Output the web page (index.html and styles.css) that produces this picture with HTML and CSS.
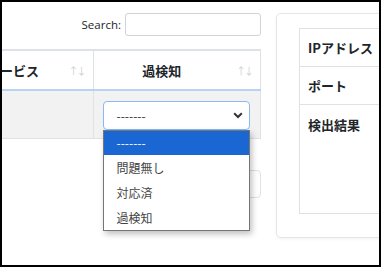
FILE: index.html
```html
<!DOCTYPE html>
<html lang="ja">

<head>
    <meta charset="UTF-8">
    <meta name="viewport" content="width=device-width, initial-scale=1.0">
    <title>検出一覧</title>
    <link rel="stylesheet" href="styles.css">
</head>

<body>

    <div class="frame">
        <div class="page">
            <div class="list-col">
                <div class="search-row">
                    <label for="search">Search:</label>
                    <input type="search" id="search">
                </div>

                <div class="table-wrap">
                    <table class="result-table">
                        <thead>
                            <tr>
                                <th class="col-service">サービス<span class="sort">&#8593;&#8595;</span></th>
                                <th class="col-false">過検知<span class="sort">&#8593;&#8595;</span></th>
                            </tr>
                        </thead>
                        <tbody>
                            <tr>
                                <td></td>
                                <td>
                                    <div class="select-box">
                                        <div class="select">
                                            <span>-------</span>
                                            <svg width="10" height="7" viewBox="0 0 10 7"><path d="M1.2 1.3 L5 5 L8.8 1.3" fill="none" stroke="#333" stroke-width="2"/></svg>
                                        </div>
                                        <ul class="options">
                                            <li class="active">-------</li>
                                            <li>問題無し</li>
                                            <li>対応済</li>
                                            <li>過検知</li>
                                        </ul>
                                    </div>
                                </td>
                            </tr>
                        </tbody>
                    </table>
                </div>

                <div class="pager">
                    <button>Next</button>
                </div>
            </div>

            <div class="card">
                <table class="detail-table">
                    <tr><th>IPアドレス</th></tr>
                    <tr><th>ポート</th></tr>
                    <tr class="tall"><th>検出結果</th></tr>
                </table>
            </div>
        </div>
    </div>

</body>

</html>
```

FILE: styles.css
```css
body {
    margin: 0;
    font-family: 'Open Sans', 'Noto Sans CJK JP', sans-serif;
    color: #212529;
    background-color: #fff;
}

.frame {
    width: 381px;
    height: 267px;
    box-sizing: border-box;
    border: 2px solid #000;
    overflow: hidden;
}

.page {
    display: flex;
    padding-top: 11px;
}

.list-col {
    width: 259px;
    flex: none;
}

.search-row {
    display: flex;
    justify-content: flex-end;
    align-items: center;
    gap: 4px;
    font-size: 11.5px;
}

.search-row input {
    width: 136px;
    height: 23px;
    box-sizing: border-box;
    border: 1px solid #ced4da;
    border-radius: 3px;
    margin: 0;
}

.table-wrap {
    margin-top: 13px;
    position: relative;
    z-index: 2;
}

.result-table {
    margin-left: -25px;
    width: 284px;
    border-collapse: collapse;
    table-layout: fixed;
    font-family: 'Noto Sans CJK JP', sans-serif;
}

.result-table th {
    position: relative;
    height: 38px;
    padding: 0 40px 0 10px;
    font-size: 13px;
    font-weight: bold;
    text-align: center;
    border-top: 2px solid #dee2e6;
    border-bottom: 2px solid #b6d3f6;
    border-right: 1px solid #dee2e6;
}

.result-table th.col-service {
    width: 116px;
    box-sizing: border-box;
    text-align: left;
    padding-left: 10px;
}

.sort {
    position: absolute;
    right: 8px;
    top: 12px;
    font-size: 10px;
    font-weight: normal;
    letter-spacing: -2px;
    color: #cdd1d5;
}

.result-table td {
    height: 48px;
    padding: 0 10px 0 9px;
    background-color: #f2f2f2;
    border-right: 1px solid #dee2e6;
    border-bottom: 1px solid #dee2e6;
    vertical-align: top;
    box-sizing: border-box;
}

.select-box {
    position: relative;
    margin-top: 10px;
}

.select {
    display: flex;
    align-items: center;
    justify-content: space-between;
    height: 29px;
    box-sizing: border-box;
    padding: 0 6px 0 13px;
    background-color: #fff;
    border: 1px solid #8ab8f2;
    border-radius: 4px;
    font-size: 12px;
    color: #333;
}

.options {
    position: absolute;
    top: 29px;
    left: 0;
    width: 100%;
    box-sizing: border-box;
    margin: 0;
    padding: 0;
    list-style: none;
    background-color: #fff;
    border: 1px solid #767676;
    box-shadow: 2px 3px 6px rgba(0, 0, 0, 0.25);
    font-size: 12px;
    color: #444;
}

.options li {
    height: 25px;
    line-height: 25px;
    padding-left: 13px;
}

.options li.active {
    height: 24px;
    line-height: 24px;
    background-color: #1a66d2;
    color: #fff;
}

.pager {
    display: flex;
    justify-content: flex-end;
    margin-top: 31px;
}

.pager button {
    width: 60px;
    height: 28px;
    background-color: #fff;
    border: 1px solid #dee2e6;
    border-radius: 4px;
    font-size: 12px;
    color: #6c757d;
}

.card {
    flex: none;
    width: 140px;
    height: 225px;
    box-sizing: border-box;
    margin-left: 15px;
    padding: 14px 0 0 22px;
    border: 1px solid #e4e6e8;
    border-radius: 5px;
    box-shadow: 0 1px 3px rgba(0, 0, 0, 0.06);
}

.detail-table {
    width: 120px;
    border-collapse: collapse;
    font-family: 'Noto Sans CJK JP', sans-serif;
}

.detail-table th {
    height: 37px;
    padding: 0 0 0 8px;
    font-size: 13px;
    font-weight: bold;
    text-align: left;
    white-space: nowrap;
    border: 1px solid #dee2e6;
}

.detail-table .tall th {
    height: 109px;
    vertical-align: top;
    padding-top: 10px;
    box-sizing: border-box;
}
```
